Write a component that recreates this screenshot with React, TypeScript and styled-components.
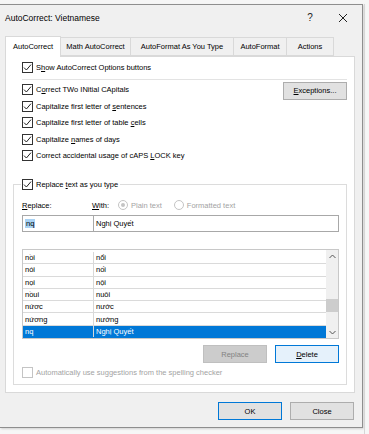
import React from "react";
import styled, { createGlobalStyle } from "styled-components";

const Global = createGlobalStyle`
  html, body { margin: 0; padding: 0; background: #f6f6f6; overflow: hidden; }
  body { font-family: "Liberation Sans", Arial, sans-serif; font-size: 7.5px; color: #000; }
  * { box-sizing: border-box; }
  u { text-decoration: underline; text-underline-offset: 1px; }
`;

const Page = styled.div`
  width: 369px;
  height: 434px;
  padding-top: 4px;
  display: flex;
  align-items: flex-start;
`;

const Dialog = styled.div`
  width: 363px;
  height: 424px;
  background: #f0f0f0;
  border: 1px solid #8e8e8e;
  border-left: none;
  display: flex;
  flex-direction: column;
  box-shadow: 1px 1px 2px rgba(0, 0, 0, 0.15);
`;

const RightStrip = styled.div`
  flex: 1;
  height: 430px;
  border-left: 1px solid #d6d6d6;
  margin-left: 1px;
`;

const TitleBar = styled.div`
  height: 25px;
  display: flex;
  align-items: center;
  padding-left: 5px;
`;

const TitleText = styled.div`
  font-size: 8.5px;
  flex: 1;
`;

const TitleGlyph = styled.div<{ $w: number }>`
  width: ${(p) => p.$w}px;
  display: flex;
  justify-content: center;
  align-items: center;
  font-size: 10px;
  color: #222;
`;

const TabsRow = styled.div`
  margin-top: 6px;
  height: 20px;
  padding-left: 5px;
  display: flex;
  align-items: flex-end;
`;

const Tab = styled.div<{ $active?: boolean; $w: number }>`
  position: relative;
  z-index: ${(p) => (p.$active ? 2 : 1)};
  width: ${(p) => p.$w}px;
  height: ${(p) => (p.$active ? 21 : 19)}px;
  margin-bottom: ${(p) => (p.$active ? -1 : 0)}px;
  margin-left: ${(p) => (p.$active ? 0 : -1)}px;
  background: ${(p) => (p.$active ? "#fff" : "#f0f0f0")};
  border: 1px solid #d9d9d9;
  border-bottom: ${(p) => (p.$active ? "none" : "1px solid #d9d9d9")};
  display: flex;
  align-items: center;
  justify-content: center;
  padding-bottom: ${(p) => (p.$active ? 2 : 0)}px;
  white-space: nowrap;
`;

const Panel = styled.div`
  margin-left: 5px;
  width: 350px;
  height: 337px;
  background: #fff;
  border: 1px solid #d9d9d9;
  padding: 2px 7px 0 7px;
  display: flex;
  flex-direction: column;
`;

const CheckRow = styled.div<{ $disabled?: boolean }>`
  height: 16.5px;
  display: flex;
  align-items: center;
  gap: 3px;
  white-space: nowrap;
  color: ${(p) => (p.$disabled ? "#a3a3a3" : "#000")};
`;

const Box = styled.div<{ $disabled?: boolean }>`
  width: 11px;
  height: 11px;
  flex: none;
  border: 1px solid ${(p) => (p.$disabled ? "#c4c4c4" : "#333")};
  background: #fff;
  display: flex;
  align-items: center;
  justify-content: center;
`;

const TopSection = styled.div`
  padding-left: 9px;
`;

const Separator = styled.div`
  margin: 3px 0 2px 9px;
  height: 1px;
  background: #e3e3e3;
`;

const OptionsBlock = styled.div`
  display: flex;
  padding-left: 9px;
`;

const OptionsList = styled.div`
  flex: 1;
`;

const Btn = styled.div<{ $variant?: "normal" | "disabled" | "focus" | "default" }>`
  width: 64px;
  height: 18px;
  flex: none;
  display: flex;
  align-items: center;
  justify-content: center;
  background: ${(p) =>
    p.$variant === "disabled" ? "#cccccc" : p.$variant === "focus" ? "#e5f1fb" : "#e1e1e1"};
  border: 1px solid
    ${(p) =>
      p.$variant === "disabled"
        ? "#bfbfbf"
        : p.$variant === "focus" || p.$variant === "default"
        ? "#0078d7"
        : "#adadad"};
  color: ${(p) => (p.$variant === "disabled" ? "#838383" : "#000")};
`;

const Group = styled.fieldset`
  margin: 14px 0 0 0;
  padding: 0 6px 3px 8px;
  border: 1px solid #dcdcdc;
  min-width: 0;
`;

const Legend = styled.legend`
  padding: 0 2px 0 1px;
  margin-left: -1px;
  height: 12px;
`;

const LegendInner = styled.div`
  display: flex;
  align-items: center;
  gap: 3px;
  height: 12px;
`;

const LabelsRow = styled.div`
  margin-top: 9px;
  height: 12px;
  display: flex;
  align-items: center;
`;

const Label = styled.div<{ $w?: number }>`
  width: ${(p) => (p.$w ? `${p.$w}px` : "auto")};
  flex: none;
`;

const Radio = styled.div<{ $checked?: boolean }>`
  width: 10px;
  height: 10px;
  border-radius: 50%;
  border: 1px solid #c4c4c4;
  background: #fff;
  display: flex;
  align-items: center;
  justify-content: center;
  margin: 0 3px 0 0;
  &::after {
    content: "";
    width: 4px;
    height: 4px;
    border-radius: 50%;
    background: ${(p) => (p.$checked ? "#c4c4c4" : "transparent")};
  }
`;

const RadioLabel = styled.div`
  color: #a3a3a3;
  margin-right: 12px;
`;

const InputsRow = styled.div`
  margin-top: 4px;
  display: flex;
  width: 317px;
`;

const Input = styled.div<{ $w: number }>`
  width: ${(p) => p.$w}px;
  height: 17px;
  border: 1px solid #a8a8a8;
  background: #fff;
  display: flex;
  align-items: center;
  padding-left: 2px;
  & + & {
    margin-left: -1px;
  }
`;

const Sel = styled.span`
  background: #a8d2f4;
  color: #000;
  padding: 0 1px;
`;

const List = styled.div`
  margin-top: 17px;
  width: 317px;
  height: 90px;
  border: 1px solid #c8c8c8;
  display: flex;
  background: #fff;
`;

const Rows = styled.div`
  flex: 1;
  padding-top: 2px;
`;

const Row = styled.div<{ $sel?: boolean }>`
  height: 12.3px;
  display: flex;
  align-items: center;
  background: ${(p) => (p.$sel ? "#0078d7" : "#fff")};
  color: ${(p) => (p.$sel ? "#fff" : "#000")};
  border-bottom: 1px solid ${(p) => (p.$sel ? "#0078d7" : "#dadada")};
`;

const Cell = styled.div<{ $w?: number }>`
  width: ${(p) => (p.$w ? `${p.$w}px` : "auto")};
  flex: ${(p) => (p.$w ? "none" : "1")};
  height: 100%;
  display: flex;
  align-items: center;
  padding-left: 2px;
  & + & {
    border-left: 1px solid #d8d8d8;
  }
`;

const Scrollbar = styled.div`
  width: 12px;
  background: #f0f0f0;
  display: flex;
  flex-direction: column;
  align-items: center;
`;

const Arrow = styled.div`
  height: 12px;
  display: flex;
  align-items: center;
  justify-content: center;
`;

const Track = styled.div`
  flex: 1;
  width: 100%;
  display: flex;
  flex-direction: column;
  justify-content: flex-end;
  padding-bottom: 14px;
`;

const Thumb = styled.div`
  height: 13px;
  width: 100%;
  background: #cdcdcd;
`;

const ButtonsRow = styled.div`
  margin-top: 6px;
  width: 317px;
  display: flex;
  justify-content: flex-end;
  gap: 8px;
`;

const AutoRow = styled(CheckRow)`
  margin-top: 1px;
`;

const Footer = styled.div`
  margin-top: 9px;
  display: flex;
  justify-content: flex-end;
  gap: 8px;
  padding-right: 8px;
`;

const Check = () => (
  <svg width="9" height="9" viewBox="0 0 9 9">
    <path d="M1 4.6 L3.4 7 L8 1.6" fill="none" stroke="#222" strokeWidth="1" />
  </svg>
);

const CheckItem = ({ children, disabled, checked = true }: { children: React.ReactNode; disabled?: boolean; checked?: boolean }) => (
  <CheckRow $disabled={disabled}>
    <Box $disabled={disabled}>{checked && <Check />}</Box>
    <span>{children}</span>
  </CheckRow>
);

const rows: [string, string][] = [
  ["nồi", "nổi"],
  ["nói", "nối"],
  ["nọi", "nội"],
  ["nồui", "nuôi"],
  ["nứơc", "nước"],
  ["nứơng", "nướng"],
  ["nq", "Nghị Quyết"],
];

export default function App() {
  return (
    <>
      <Global />
      <Page>
        <Dialog>
          <TitleBar>
            <TitleText>AutoCorrect: Vietnamese</TitleText>
            <TitleGlyph $w={20}>?</TitleGlyph>
            <TitleGlyph $w={10} />
            <TitleGlyph $w={26}>
              <svg width="10" height="10" viewBox="0 0 10 10">
                <path d="M1 1 L9 9 M9 1 L1 9" stroke="#222" strokeWidth="1" />
              </svg>
            </TitleGlyph>
            <TitleGlyph $w={6} />
          </TitleBar>
          <TabsRow>
            <Tab $active $w={56}>AutoCorrect</Tab>
            <Tab $w={71}>Math AutoCorrect</Tab>
            <Tab $w={104}>AutoFormat As You Type</Tab>
            <Tab $w={54}>AutoFormat</Tab>
            <Tab $w={48}>Actions</Tab>
          </TabsRow>
          <Panel>
            <TopSection>
              <CheckItem>
                S<u>h</u>ow AutoCorrect Options buttons
              </CheckItem>
            </TopSection>
            <Separator />
            <OptionsBlock>
              <OptionsList>
                <CheckItem>
                  C<u>o</u>rrect TWo INitial CApitals
                </CheckItem>
                <CheckItem>
                  Capitalize first letter of <u>s</u>entences
                </CheckItem>
                <CheckItem>
                  Capitalize first letter of table <u>c</u>ells
                </CheckItem>
                <CheckItem>
                  Capitalize <u>n</u>ames of days
                </CheckItem>
                <CheckItem>
                  Correct accidental usage of cAPS <u>L</u>OCK key
                </CheckItem>
              </OptionsList>
              <Btn $variant="normal">
                <span>
                  <u>E</u>xceptions...
                </span>
              </Btn>
            </OptionsBlock>
            <Group>
              <Legend>
                <LegendInner>
                  <Box>
                    <Check />
                  </Box>
                  <span>
                    Replace <u>t</u>ext as you type
                  </span>
                </LegendInner>
              </Legend>
              <LabelsRow>
                <Label $w={70}>
                  <u>R</u>eplace:
                </Label>
                <Label $w={26}>
                  <u>W</u>ith:
                </Label>
                <Radio $checked />
                <RadioLabel>Plain text</RadioLabel>
                <Radio />
                <RadioLabel>Formatted text</RadioLabel>
              </LabelsRow>
              <InputsRow>
                <Input $w={72}>
                  <Sel>nq</Sel>
                </Input>
                <Input $w={246}>Nghị Quyết</Input>
              </InputsRow>
              <List>
                <Rows>
                  {rows.map(([a, b], i) => (
                    <Row key={i} $sel={i === rows.length - 1}>
                      <Cell $w={70}>{a}</Cell>
                      <Cell>{b}</Cell>
                    </Row>
                  ))}
                </Rows>
                <Scrollbar>
                  <Arrow>
                    <svg width="7" height="5" viewBox="0 0 7 5">
                      <path d="M0.5 4 L3.5 1 L6.5 4" fill="none" stroke="#555" strokeWidth="1" />
                    </svg>
                  </Arrow>
                  <Track>
                    <Thumb />
                  </Track>
                  <Arrow>
                    <svg width="7" height="5" viewBox="0 0 7 5">
                      <path d="M0.5 1 L3.5 4 L6.5 1" fill="none" stroke="#555" strokeWidth="1" />
                    </svg>
                  </Arrow>
                </Scrollbar>
              </List>
              <ButtonsRow>
                <Btn $variant="disabled">Replace</Btn>
                <Btn $variant="focus">
                  <span>
                    <u>D</u>elete
                  </span>
                </Btn>
              </ButtonsRow>
              <AutoRow $disabled>
                <Box $disabled />
                <span>Automatically use suggestions from the spelling checker</span>
              </AutoRow>
            </Group>
          </Panel>
          <Footer>
            <Btn $variant="default">OK</Btn>
            <Btn $variant="normal">Close</Btn>
          </Footer>
        </Dialog>
        <RightStrip />
      </Page>
    </>
  );
}
